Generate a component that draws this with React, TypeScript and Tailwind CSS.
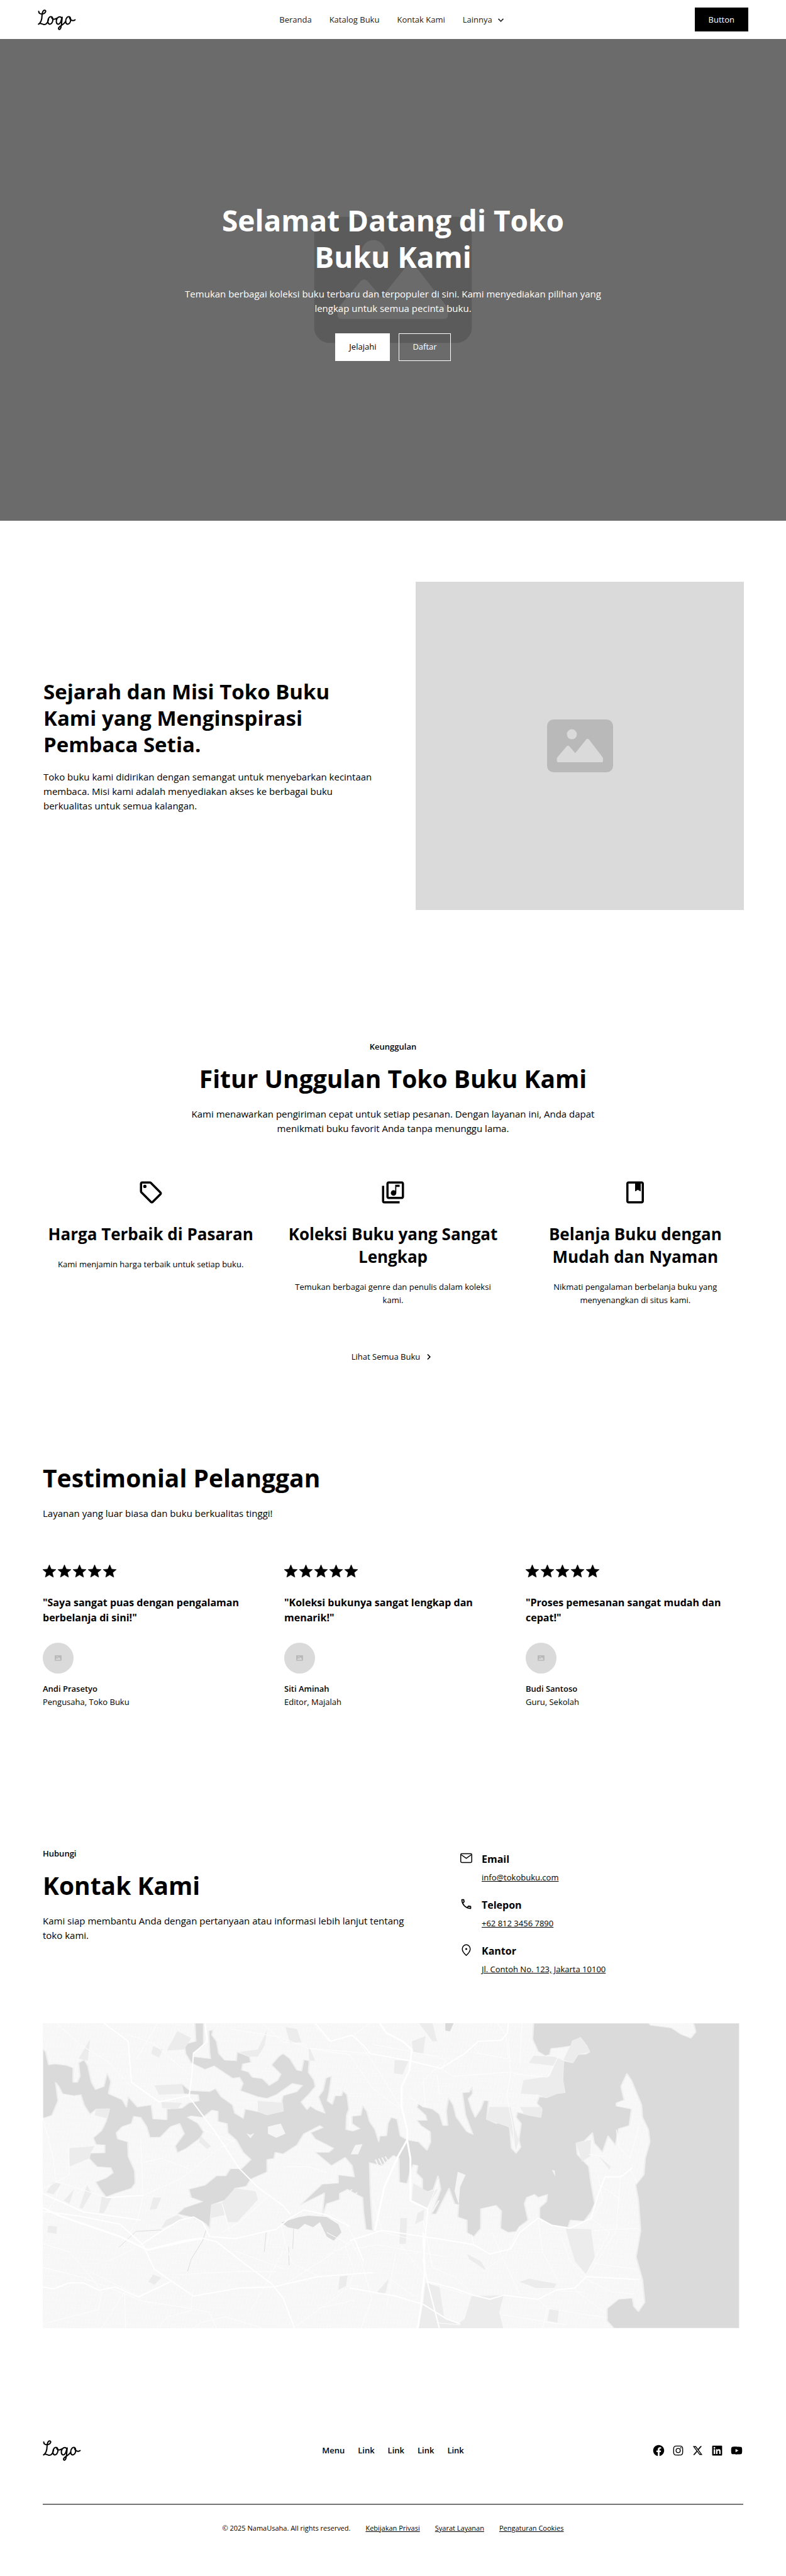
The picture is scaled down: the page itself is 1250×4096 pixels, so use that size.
import React from "react";
import {
  BiChevronDown,
  BiChevronRight,
  BiLogoFacebookCircle,
  BiLogoInstagram,
  BiLogoLinkedinSquare,
  BiLogoYoutube,
} from "react-icons/bi";
import { FaXTwitter } from "react-icons/fa6";
import { MdOutlineCall, MdOutlineLibraryMusic, MdOutlineSell } from "react-icons/md";

function Logo() {
  return (
    <svg viewBox="33 37 210 114" className="h-[33px] w-[61px]" role="img" aria-label="Logo" fill="none" stroke="black" strokeWidth="7" strokeLinecap="round" strokeLinejoin="round">
      <path d="M38 47C38 58 48 64 60 62C74 60 80 46 73 42C64 38 56 52 56 72C56 90 50 108 37 118C46 108 56 118 66 120C80 121 88 108 92 92" />
      <path d="M110 78C98 73 88 86 88 102C88 120 102 122 110 112C118 100 118 84 110 78C108 88 120 96 136 86" />
      <path d="M164 84C156 72 138 78 135 98C133 120 148 124 158 108L167 80C165 100 164 120 160 136C157 150 146 150 147 140C150 128 172 124 186 104" />
      <path d="M208 78C196 73 186 86 186 102C186 120 200 122 208 112C216 100 216 84 208 78C206 90 222 106 238 94" />
    </svg>
  );
}

function ImageGlyph({ className, shade, cut }: { className: string; shade: string; cut: string }) {
  return (
    <svg viewBox="0 0 290 232" className={className} aria-hidden="true">
      <rect width="290" height="232" rx="29" fill={shade} />
      <circle cx="109" cy="65" r="22" fill={cut} />
      <path
        d="M43 172q0-4 3-7l40-47q6-6 12 0l26 30l48-60q6-6 12 0l59 76q3 4 3 8v8q0 8-8 8H51q-8 0-8-8z"
        fill={cut}
      />
    </svg>
  );
}

function BookIcon() {
  return (
    <svg viewBox="0 0 24 24" className="size-[42px]" fill="currentColor" aria-hidden="true">
      <path
        fillRule="evenodd"
        d="M18 2H6c-1.1 0-2 .9-2 2v16c0 1.1.9 2 2 2h12c1.1 0 2-.9 2-2V4c0-1.1-.9-2-2-2zM6 4h6v7l2.5-1.5L17 11V4h1v16H6V4z"
      />
      <path d="M12 3h5v8l-2.5-1.5L12 11z" />
    </svg>
  );
}

function EnvelopeIcon({ className }: { className: string }) {
  return (
    <svg viewBox="0 0 24 24" className={className} fill="none" stroke="currentColor" strokeWidth="1.7" strokeLinejoin="round" aria-hidden="true">
      <rect x="2" y="4" width="20" height="16" rx="2" />
      <path d="M3 6l9 6.5L21 6" />
    </svg>
  );
}

function PinIcon({ className }: { className: string }) {
  return (
    <svg viewBox="0 0 24 24" className={className} fill="none" stroke="currentColor" strokeWidth="1.7" strokeLinejoin="round" aria-hidden="true">
      <path d="M12 22c-4.800-4.200-7.200-8-7.200-11.600C4.800 5.800 8.200 2.600 12 2.600s7.200 3.200 7.200 7.800C19.200 14 16.800 17.800 12 22z" />
      <circle cx="12" cy="10.300" r="1.800" fill="currentColor" stroke="none" />
    </svg>
  );
}

function Star() {
  return (
    <svg viewBox="2 2 20 19" className="h-5 w-[21px]" fill="black" stroke="black" strokeWidth="0.600" strokeLinejoin="round" aria-hidden="true">
      <path d="M12 17.27L18.18 21l-1.640-7.030L22 9.240l-7.190-.61L12 2 9.190 8.630 2 9.240l5.460 4.730L5.820 21z" />
    </svg>
  );
}

const water =
  "M1090 42 1088 120 1100 180 1115 200 1125 195 1128 165 1150 160 1172 152 1175 128 1192 112 1205 150 1212 182 1205 192 1186 195 1175 235 1155 225 1153 320 1158 380 1140 385 1118 405 1103 398 1097 430 1108 460 1105 500 1080 490 1055 475 1052 500 1063 530 1058 610 1062 645 1052 675 1042 650 1038 550 1020 525 1008 530 988 510 992 420 982 418 975 460 963 500 955 460 948 410 957 385 956 352 950 378 935 380 938 430 942 490 958 583 945 570 922 500 915 440 905 405 900 470 903 540 893 540 885 485 870 460 850 450 840 433 836 450 855 490 858 515 836 515 845 540 865 570 866 620 858 660 840 620 815 610 800 590 793 510 780 500 773 530 770 590 755 592 753 618 745 560 733 520 727 470 718 443 714 490 695 495 695 530 712 555 697 567 682 560 683 490 688 460 684 390 675 372 672 395 658 395 652 437 641 420 645 380 650 300 638 310 632 370 622 400 636 480 618 465 604 445 597 463 584 425 600 390 615 350 612 320 600 280 602 225 590 220 585 275 575 270 560 215 545 190 535 205 520 245 540 290 533 320 515 345 500 312 478 305 470 280 455 270 457 240 475 232 472 205 445 182 443 225 418 222 405 190 400 130 390 100 392 75 383 80 385 180 387 215 375 212 350 205 350 185 372 150 372 42 353 42 355 130 330 145 333 190 345 235 375 267 395 250 415 280 435 310 450 305 458 335 452 370 490 400 510 408 530 390 565 335 587 345 575 375 545 395 542 420 545 470 510 488 495 475 462 460 458 505 440 480 435 440 410 400 398 360 385 375 342 370 325 338 285 358 310 365 330 385 360 390 362 420 340 430 325 455 292 460 292 512 262 508 258 440 228 450 208 400 204 450 195 415 165 385 170 325 162 285 155 350 137 365 128 330 120 250 112 220 100 235 103 300 97 330 88 330 88 260 75 248 48 240 35 245 28 180 22 168 22 505 42 490 55 420 50 330 57 350 65 385 90 395 105 390 112 440 125 485 138 460 167 458 160 520 150 565 132 600 138 632 157 635 157 672 125 675 123 700 140 740 170 745 175 770 160 795 137 815 150 860 160 888 180 870 215 845 223 820 222 760 208 690 207 620 185 605 182 575 195 545 215 530 220 495 235 500 248 545 255 598 278 596 300 545 320 530 330 580 310 640 315 672 335 650 365 600 372 570 360 530 337 500 345 493 370 500 390 465 403 470 403 520 423 530 425 575 443 610 458 670 475 705 455 750 430 750 420 785 400 785 375 830 340 850 345 890 370 910 330 940 315 970 345 985 375 1015 385 1040 390 925 435 890 440 845 465 835 475 800 510 765 510 705 525 700 528 670 545 678 575 635 590 580 625 540 632 550 605 575 615 605 655 650 645 670 615 670 650 735 680 695 695 735 700 790 665 780 665 820 630 825 583 925 635 868 630 980 640 920 668 900 668 870 685 850 705 875 718 890 720 960 725 1045 740 1050 735 880 733 720 760 735 785 685 797 700 798 815 815 822 822 760 828 730 838 735 835 770 848 800 848 850 860 862 872 850 882 785 888 850 868 970 878 970 906 845 918 920 927 925 925 985 945 1000 945 1060 960 1080 975 1040 975 945 1008 928 1020 955 1018 1040 1035 1060 1052 1055 1060 1030 1078 1000 1070 920 1075 890 1092 875 1100 890 1120 875 1118 910 1103 940 1103 990 1130 1025 1165 1035 1170 1000 1200 1005 1215 960 1223 920 1215 820 1210 740 1185 680 1183 625 1200 615 1218 575 1222 625 1240 670 1252 590 1268 635 1275 555 1298 540 1303 460 1270 445 1270 430 1287 415 1280 350 1293 287 1303 320 1325 440 1327 500 1340 560 1343 620 1333 700 1330 780 1312 830 1318 900 1323 1050 1313 1180 1327 1290 1332 1400 1318 1445 1308 1420 1305 1380 1275 1385 1250 1430 1250 1490 1265 1526 1538 1526 1538 42 1438 42 1443 85 1432 115 1410 95 1390 65 1345 52 1340 42Z";

const bays = [
  "M541 1012 580 985 600 978 640 985 665 1020 672 1060 655 1100 640 1080 625 1010 610 1035 592 1018 578 1045 555 1035Z",
  "M898 42 916 42 908 82 898 78Z",
];

const islands = [
  "M512 545 540 530 550 580 530 600 512 580Z",
  "M465 578 474 585 483 575 474 602Z",
  "M702 635 718 630 708 680 692 680Z",
  "M925 765 942 780 930 840 927 925 918 860Z",
  "M1130 755 1136 760 1137 788Z",
];

const parks = [
  "M1090 200 1135 205 1155 225 1153 320 1158 380 1140 385 1118 405 1100 390 1062 385 1068 320 1125 300 1135 250 1080 235Z",
  "M1175 128 1192 112 1205 150 1212 182 1186 195 1175 235 1155 220Z",
  "M994 450 1040 450 1050 560 1058 610 1052 660 1038 550 988 510Z",
  "M1060 450 1108 450 1105 500 1070 485Z",
  "M1160 1040 1215 1045 1223 1180 1205 1265 1180 1200 1168 1110Z",
  "M1183 625 1215 610 1213 690 1195 715Z",
  "M955 1370 1025 1365 1015 1450 1024 1526 915 1526 940 1480Z",
  "M855 1305 885 1320 895 1470 925 1500 920 1526 840 1526 850 1400Z",
  "M1060 1300 1080 1285 1140 1310 1135 1330 1095 1330Z",
  "M440 845 485 860 490 900 445 1010 425 1010 412 915Z",
  "M390 925 412 915 418 975 388 990Z",
  "M315 975 330 995 280 1040 290 1000Z",
  "M828 820 860 862 882 850 855 950 825 910Z",
  "M788 222 818 225 805 292 786 285Z",
  "M825 130 855 105 850 190 828 185Z",
  "M315 80 345 115 330 170 292 175Z",
  "M262 155 283 170 275 210 258 190Z",
  "M265 345 325 338 330 385 275 390Z",
  "M280 425 325 430 315 460 282 455Z",
  "M490 420 545 430 545 470 510 488 490 470Z",
  "M600 150 602 225 615 225Z M550 60 560 140 585 135 575 70Z",
  "M510 75 505 150 490 205 472 205 450 182 490 170Z",
  "M80 650 135 640 125 675 123 700 80 740Z",
  "M125 120 120 225 100 215Z",
  "M45 815 62 825 45 875 30 865Z M90 850 80 920 68 905Z M150 885 172 890 155 965 145 965Z M118 830 128 870 108 945 102 940Z",
  "M262 890 280 890 270 945 255 950Z M34 1027 53 1032 52 1067 32 1060Z",
  "M668 1275 685 1270 682 1320 665 1340Z M775 1285 768 1355 748 1355Z M800 990 815 990 812 1115 798 1115Z",
  "M1125 1430 1145 1435 1142 1500 1120 1490Z M262 1265 280 1280 265 1315 252 1300Z",
  "M840 40 870 42 880 130 870 130Z M138 458 167 458 162 505 135 490Z M365 590 388 640 380 655 362 620Z",
  "M945 1165 975 1200 987 1245 950 1190Z M838 965 852 950 850 1000 832 1020Z M1232 690 1258 740 1255 755Z",
];

const creeks = [
  "M378 1045 370 1100 345 1190 337 1250",
  "M568 1035 566 1140",
  "M508 1060 504 1155M557 1130 558 1220",
  "M280 1048 225 1055 188 1132",
];

const minorRoads = [
  "M52 42 102 145 165 230 212 345M205 95 262 140 330 270M272 42 225 220M22 500 45 700 50 810 160 890 240 880 322 800 400 660 440 610",
  "M235 600 240 880 230 990 212 1060 240 1140M78 640 80 780 22 850M370 560 440 620M125 810 98 870M430 70 540 110 600 165 690 195",
  "M500 42 545 135 590 140 605 165 735 190M735 42 700 95 760 300 800 450M888 240 850 320 855 450M960 185 1035 215 1030 100 1010 42",
  "M888 262 915 300 1040 280 1055 290 1120 305 1145 200M1035 120 1040 280 1032 400 1045 545 1048 640M880 290 885 390M960 160 970 185",
  "M690 195 740 360 800 460M740 145 880 205 900 225 888 262M820 400 850 450M1065 42 1062 150 1060 240",
  "M150 1526 200 1350 202 1526M22 1505 143 1435 150 1350 125 1270 80 1155 22 1115M125 1250 230 1370 300 1300M22 1230 110 1280 240 1395 345 1430 385 1450 400 1526",
  "M270 1526 295 1470 345 1440 348 1350M350 1526 365 1500 420 1470 500 1526M320 1265 440 1250 530 1250M610 42 645 130",
  "M570 1520 620 1440 685 1330 700 1250 680 1120 700 1090M655 1160 550 1310M515 880 450 1010 412 1060M412 920 430 1060M540 1015 550 1120 565 1210 620 1270",
  "M515 1050 510 1120M545 1150 505 1320 475 1440M440 1150 550 1240M745 1050 820 1090M690 1090 715 1200 738 1380 715 1526M790 1160 770 1420",
  "M740 900 760 1050M700 1140 750 1120 900 1180M850 1000 870 1230 920 1280 960 1366M960 1120 955 1070M1060 1030 1030 1170 980 1250M1000 1060 1020 1170 1060 1360",
  "M1100 1000 1110 1160 1145 1300M1150 1080 1170 1200 1205 1275M1220 1210 1315 1240M1215 990 1255 1060 1220 1200 1200 1280M1230 780 1240 900 1215 1000",
  "M1280 780 1275 900 1270 1050 1215 1250M1300 750 1315 820M1210 680 1245 690M1270 560 1275 640 1300 700 1320 540M1235 830 1280 900M1220 1050 1318 1040",
  "M1120 1430 1250 1475M1020 1460 1160 1510M1100 1385 1120 1430 1110 1526M1190 1270 1260 1350 1310 1360M1180 1340 1245 1450M1145 1345 1200 1350",
  "M690 490 690 550M865 1310 940 1360M780 1290 830 1370M800 1120 860 1290M640 1170 690 1120 640 1060M545 740 600 740 640 770M240 720 280 700 340 750",
  "M860 940 885 800M862 960 850 1030M880 1500 930 1510M700 1090 680 1010 640 960M165 1200 220 1140M60 830 50 900 22 980M620 1430 700 1390",
];

const majorRoads = [
  "M22 870 110 960 235 1000",
  "M22 958 100 980 190 1020 240 1120 265 1240 350 1370 450 1330 525 1325 620 1275 740 1255",
  "M155 42 208 130 215 330 275 425 340 395",
  "M235 1120 280 1055 320 1000 350 985 370 1010 385 1080 440 1090 530 1045 560 990 590 950 640 975 690 1030",
  "M615 42 648 130 695 100 720 150 735 190 820 225 888 262 940 190 970 130 1020 125 1033 90 1035 42",
  "M690 1100 760 1050 880 1090 960 1120 995 1165 1040 1140 1060 1060 1100 990 1130 1025 1170 1040 1215 990 1230 880 1245 790 1280 790 1305 745",
  "M570 1526 545 1380 520 1310 460 1210 400 1105 370 1088 250 1145",
  "M690 1330 790 1370 850 1410 900 1480 930 1505",
  "M960 1366 995 1385 1025 1365 1100 1385 1140 1340 1180 1330 1205 1275 1320 1290",
  "M860 1300 915 1330 960 1366M22 1325 45 1335 80 1305 110 1305 145 1342 180 1325 230 1375 300 1300",
  "M860 940 850 1200 860 1310 885 1526",
  "M700 1090 720 1200M160 890 240 880",
  "M375 42 380 130 350 190 345 330 340 400 400 580 450 750 490 840 545 930 560 970",
];

const trunkRoads = [
  "M755 42 770 90 805 130 825 170 820 270 803 350 803 450 815 560 815 610 795 690 765 840 745 1050",
  "M815 610 822 700 822 905 858 945",
  "M22 940 60 980 190 1080 250 1145 330 1100 370 1088",
  "M850 1060 853 1250 845 1420 838 1526",
];

function CoastMap() {
  return (
    <svg
      viewBox="22 42 1516 1484"
      preserveAspectRatio="none"
      className="block aspect-[1108/485] w-full bg-[#f7f7f7]"
      role="img"
      aria-label="Peta lokasi"
      strokeLinejoin="round"
      fill="none"
    >
      <defs>
        <pattern id="streets" width="15" height="34" patternUnits="userSpaceOnUse" patternTransform="rotate(6)">
          <path d="M0 0H15M0 17H15M0 0V34M8 0V17" stroke="#fbfbfb" strokeWidth="1.5" />
        </pattern>
      </defs>
      <rect x="22" y="42" width="1516" height="1484" fill="url(#streets)" />
      <path d={water} fill="#dadada" stroke="#efefef" strokeWidth="3" />
      {bays.map((d) => (
        <path key={d} d={d} fill="#dadada" />
      ))}
      {islands.map((d) => (
        <path key={d} d={d} fill="#f5f5f5" />
      ))}
      {parks.map((d) => (
        <path key={d} d={d} fill="#ececec" />
      ))}
      {creeks.map((d) => (
        <path key={d} d={d} stroke="#dddddd" strokeWidth="1" vectorEffect="non-scaling-stroke" />
      ))}
      <path d="M746 705 752 735M753 700 760 732M760 695 767 725M767 690 774 715M685 875 695 850M695 895 706 865M705 945 716 905M870 960 884 905" stroke="#f7f7f7" strokeWidth="3" />
      {minorRoads.map((d) => (
        <path key={d} d={d} stroke="#fefefe" strokeWidth="1" vectorEffect="non-scaling-stroke" />
      ))}
      {majorRoads.map((d) => (
        <path key={d} d={d} stroke="#ffffff" strokeWidth="2" vectorEffect="non-scaling-stroke" />
      ))}
      {trunkRoads.map((d) => (
        <path key={d} d={d} stroke="#ffffff" strokeWidth="3" vectorEffect="non-scaling-stroke" />
      ))}
    </svg>
  );
}

const features = [
  { icon: <MdOutlineSell className="size-[42px]" />, title: "Harga Terbaik di Pasaran", text: "Kami menjamin harga terbaik untuk setiap buku." },
  { icon: <MdOutlineLibraryMusic className="size-[42px]" />, title: "Koleksi Buku yang Sangat Lengkap", text: "Temukan berbagai genre dan penulis dalam koleksi kami." },
  { icon: <BookIcon />, title: "Belanja Buku dengan Mudah dan Nyaman", text: "Nikmati pengalaman berbelanja buku yang menyenangkan di situs kami." },
];

const testimonials = [
  { quote: "\"Saya sangat puas dengan pengalaman berbelanja di sini!\"", name: "Andi Prasetyo", role: "Pengusaha, Toko Buku" },
  { quote: "\"Koleksi bukunya sangat lengkap dan menarik!\"", name: "Siti Aminah", role: "Editor, Majalah" },
  { quote: "\"Proses pemesanan sangat mudah dan cepat!\"", name: "Budi Santoso", role: "Guru, Sekolah" },
];

const contacts = [
  { Icon: EnvelopeIcon, title: "Email", value: "info@tokobuku.com" },
  { Icon: MdOutlineCall, title: "Telepon", value: "+62 812 3456 7890" },
  { Icon: PinIcon, title: "Kantor", value: "Jl. Contoh No. 123, Jakarta 10100" },
];

const socials = [
  { Icon: BiLogoFacebookCircle, label: "Facebook", size: "size-[21px]" },
  { Icon: BiLogoInstagram, label: "Instagram", size: "size-[21px]" },
  { Icon: FaXTwitter, label: "X", size: "size-[17px]" },
  { Icon: BiLogoLinkedinSquare, label: "LinkedIn", size: "size-[21px]" },
  { Icon: BiLogoYoutube, label: "YouTube", size: "size-[21px]" },
];

export default function App() {
  return (
    <div className="min-h-screen bg-white font-['Open_Sans','Noto_Sans',sans-serif] text-[13px] leading-[21px] text-black">
      <header className="grid h-[62px] grid-cols-[1fr_auto_1fr] items-center px-[60px]">
        <a href="#" className="justify-self-start">
          <Logo />
        </a>
        <nav className="flex items-center gap-7 text-[#222]">
          <a href="#">Beranda</a>
          <a href="#">Katalog Buku</a>
          <a href="#">Kontak Kami</a>
          <button type="button" className="flex items-center gap-1">
            Lainnya
            <BiChevronDown className="size-[19px]" />
          </button>
        </nav>
        <button type="button" className="h-[38px] justify-self-end bg-black px-[22px] text-white">
          Button
        </button>
      </header>

      <section className="relative flex h-[766px] flex-col items-center justify-center bg-[#6b6b6b] pt-1 text-center text-white">
        <ImageGlyph className="absolute top-1/2 left-1/2 w-[251px] -translate-x-1/2 -translate-y-1/2" shade="#5b5b5b" cut="#6b6b6b" />
        <h1 className="relative max-w-[666px] text-[46px] leading-[58px] font-bold">
          Selamat Datang di Toko
          <br />
          Buku Kami
        </h1>
        <p className="relative mt-[19px] max-w-[666px] text-[15px] leading-[23px]">
          Temukan berbagai koleksi buku terbaru dan terpopuler di sini. Kami menyediakan pilihan yang lengkap untuk semua pecinta buku.
        </p>
        <div className="relative mt-7 flex gap-[14px]">
          <button type="button" className="h-11 border border-white bg-white px-[21px] text-black">
            Jelajahi
          </button>
          <button type="button" className="h-11 border border-white px-[21px]">
            Daftar
          </button>
        </div>
      </section>

      <section className="grid grid-cols-[540fr_522fr] items-center gap-[52px] pr-[67px] pl-[69px] py-[97px]">
        <div>
          <h2 className="max-w-[480px] text-[33px] leading-[42px] font-bold">Sejarah dan Misi Toko Buku Kami yang Menginspirasi Pembaca Setia.</h2>
          <p className="mt-[19px] text-[15px] leading-[23px]">
            Toko buku kami didirikan dengan semangat untuk menyebarkan kecintaan
            <br />
            membaca. Misi kami adalah menyediakan akses ke berbagai buku
            <br />
            berkualitas untuk semua kalangan.
          </p>
        </div>
        <div className="flex aspect-square items-center justify-center bg-[#dadada]">
          <ImageGlyph className="w-[105px]" shade="#b9b9b9" cut="#dadada" />
        </div>
      </section>

      <section className="flex flex-col items-center px-[68px] pt-[110px] pb-[97px] text-center">
        <p className="font-semibold">Keunggulan</p>
        <h2 className="mt-[15px] text-[39px] leading-[50px] font-bold">Fitur Unggulan Toko Buku Kami</h2>
        <p className="mt-5 max-w-[650px] text-[15px] leading-[23px]">
          Kami menawarkan pengiriman cepat untuk setiap pesanan. Dengan layanan ini, Anda dapat menikmati buku favorit Anda tanpa menunggu lama.
        </p>
        <div className="mt-[69px] grid w-full grid-cols-3 gap-[42px]">
          {features.map((f) => (
            <article key={f.title} className="flex flex-col items-center">
              {f.icon}
              <h3 className="mt-[27px] text-[26px] leading-[36px] font-bold">{f.title}</h3>
              <p className="mt-5 max-w-[324px]">{f.text}</p>
            </article>
          ))}
        </div>
        <a href="#" className="mt-[69px] flex items-center gap-1">
          Lihat Semua Buku
          <BiChevronRight className="size-[19px]" />
        </a>
      </section>

      <section className="pt-[60px] pr-[72px] pb-[110px] pl-[68px]">
        <h2 className="text-[39px] leading-[50px] font-bold">Testimonial Pelanggan</h2>
        <p className="mt-5 text-[15px] leading-[23px]">Layanan yang luar biasa dan buku berkualitas tinggi!</p>
        <div className="mt-[69px] grid grid-cols-3 gap-[42px]">
          {testimonials.map((t) => (
            <figure key={t.name}>
              <div className="flex h-[22px] items-center gap-[3px]" role="img" aria-label="5 dari 5 bintang">
                {[1, 2, 3, 4, 5].map((n) => (
                  <Star key={n} />
                ))}
              </div>
              <blockquote className="mt-[27px] text-[16px] leading-[24px] font-bold">{t.quote}</blockquote>
              <div className="mt-7 flex size-[49px] items-center justify-center rounded-full bg-[#dadada]">
                <ImageGlyph className="w-[11px]" shade="#b9b9b9" cut="#dadada" />
              </div>
              <figcaption className="mt-[14px]">
                <p className="font-semibold">{t.name}</p>
                <p>{t.role}</p>
              </figcaption>
            </figure>
          ))}
        </div>
      </section>

      <section className="px-[68px] pt-[110px] pb-[97px]">
        <div className="grid grid-cols-[595fr_451fr] gap-[68px]">
          <div>
            <p className="font-semibold">Hubungi</p>
            <h2 className="mt-[15px] text-[39px] leading-[50px] font-bold">Kontak Kami</h2>
            <p className="mt-5 max-w-[580px] text-[15px] leading-[23px]">
              Kami siap membantu Anda dengan pertanyaan atau informasi lebih lanjut tentang toko kami.
            </p>
          </div>
          <ul className="flex flex-col gap-[21px] pt-[7px]">
            {contacts.map(({ Icon, title, value }) => (
              <li key={title} className="flex gap-[14px]">
                <Icon className="size-[21px] shrink-0" />
                <div>
                  <h3 className="text-[16px] leading-[24px] font-bold">{title}</h3>
                  <a href="#" className="mt-[7px] block underline">
                    {value}
                  </a>
                </div>
              </li>
            ))}
          </ul>
        </div>
        <div className="mt-[75px] pr-[6px]">
          <CoastMap />
        </div>
      </section>

      <footer className="px-[68px] pt-[81px] pb-[67px]">
        <div className="grid grid-cols-[1fr_auto_1fr] items-center">
          <a href="#" className="justify-self-start">
            <Logo />
          </a>
          <nav className="flex gap-[21px] font-semibold">
            <a href="#">Menu</a>
            <a href="#">Link</a>
            <a href="#">Link</a>
            <a href="#">Link</a>
            <a href="#">Link</a>
          </nav>
          <div className="flex gap-[10px] justify-self-end">
            {socials.map(({ Icon, label, size }) => (
              <a key={label} href="#" aria-label={label} className="flex size-[21px] items-center justify-center">
                <Icon className={size} />
              </a>
            ))}
          </div>
        </div>
        <hr className="mt-[68px] border-t-2 border-[#767676]" />
        <div className="mt-7 flex justify-center gap-6 text-[11px] leading-[18px]">
          <p>© 2025 NamaUsaha. All rights reserved.</p>
          <a href="#" className="underline">Kebijakan Privasi</a>
          <a href="#" className="underline">Syarat Layanan</a>
          <a href="#" className="underline">Pengaturan Cookies</a>
        </div>
      </footer>
    </div>
  );
}
